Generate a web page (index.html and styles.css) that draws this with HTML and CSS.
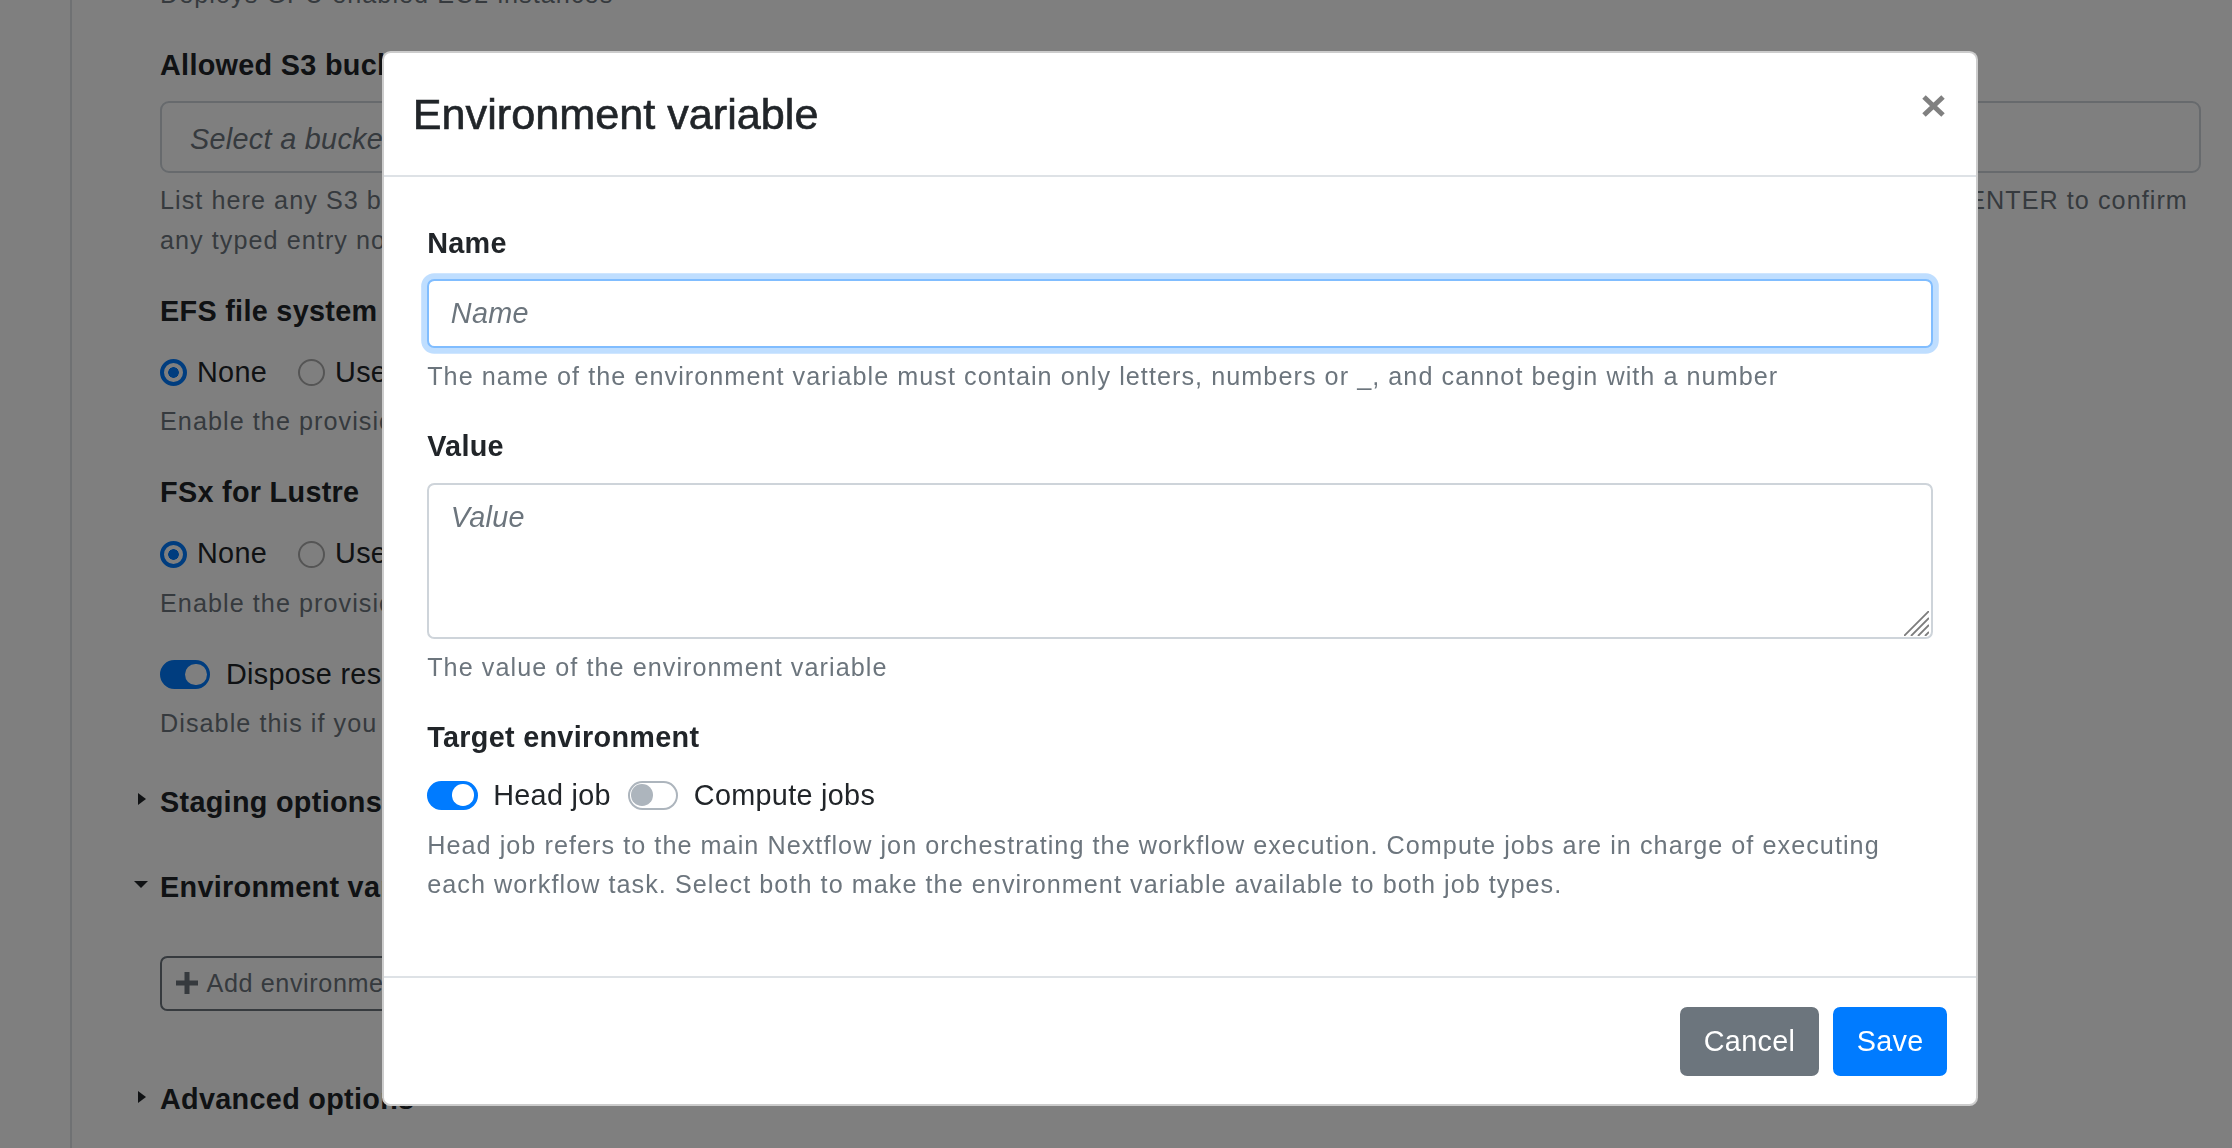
FILE: index.html
```html
<!DOCTYPE html>
<html lang="en">
<head>
<meta charset="utf-8">
<title>Environment variable</title>
<link rel="stylesheet" href="styles.css">
</head>
<body>
<div class="page">
  <aside class="sidebar"></aside>
  <main class="content">
    <p class="bg-help first">Deploys GPU enabled EC2 instances</p>

    <section class="bg-group">
      <div class="bg-label">Allowed S3 buckets</div>
      <div class="bg-select"><span class="bg-ph">Select a bucket...</span></div>
      <p class="bg-help multi"><span class="ln">List here any S3 bucket you want to make accessible from this compute environment; choose from the dropdown or type the bucket name and press ENTER to confirm</span><span class="ln">any typed entry not listed in the dropdown menu.</span></p>
    </section>

    <section class="bg-group">
      <div class="bg-label">EFS file system</div>
      <div class="bg-radios">
        <span class="bg-radio"><span class="dot on"></span>None</span>
        <span class="bg-radio"><span class="dot"></span>Use existing EFS</span>
        <span class="bg-radio"><span class="dot"></span>Create new EFS</span>
      </div>
      <p class="bg-help after-radios">Enable the provisioning of an EFS file system shared across the compute nodes</p>
    </section>

    <section class="bg-group">
      <div class="bg-label">FSx for Lustre</div>
      <div class="bg-radios">
        <span class="bg-radio"><span class="dot on"></span>None</span>
        <span class="bg-radio"><span class="dot"></span>Use existing FSx</span>
        <span class="bg-radio"><span class="dot"></span>Create new FSx</span>
      </div>
      <p class="bg-help after-radios">Enable the provisioning of an FSx for Lustre file system</p>
    </section>

    <div class="bg-switch-row"><span class="track on"></span><span>Dispose resources</span></div>
    <p class="bg-help after-switch">Disable this if you want to preserve the created resources when the compute environment is deleted</p>

    <div class="summary staging"><span class="marker closed"></span><span>Staging options</span></div>
    <div class="summary envvars"><span class="marker open"></span><span>Environment variables</span></div>
    <button class="bg-add" type="button">
      <svg class="plus" width="22" height="22" viewBox="0 0 22 22" aria-hidden="true"><rect x="8.5" y="0" width="5" height="22" fill="currentColor"/><rect x="0" y="8.5" width="22" height="5" fill="currentColor"/></svg>
      <span>Add environment variable</span>
    </button>
    <div class="summary advanced"><span class="marker closed"></span><span>Advanced options</span></div>
  </main>
</div>

<div class="backdrop"></div>

<div class="modal">
  <div class="dialog">
    <header class="m-header">
      <h4 class="m-title">Environment variable</h4>
      <button class="m-close" type="button" aria-label="Close">
        <svg width="25" height="43" viewBox="0 0 25 43" aria-hidden="true"><path d="M2 15 L21 33 M21 15 L2 33" stroke="#808080" stroke-width="5" fill="none"/></svg>
      </button>
    </header>
    <div class="m-body">
      <div class="fg">
        <label class="fl" for="envName">Name</label>
        <input class="fc focused" id="envName" type="text" placeholder="Name">
        <small class="ft">The name of the environment variable must contain only letters, numbers or _, and cannot begin with a number</small>
      </div>
      <div class="fg">
        <label class="fl" for="envValue">Value</label>
        <div class="ta-wrap">
          <textarea class="fc ta" id="envValue" placeholder="Value"></textarea>
          <svg class="grip" width="25" height="25" viewBox="0 0 25 25" aria-hidden="true"><path d="M0 25 L25 0 M7 25 L25 7 M14 25 L25 14 M21 25 L25 21" stroke="#7d7d7d" stroke-width="1.8" fill="none"/></svg>
        </div>
        <small class="ft">The value of the environment variable</small>
      </div>
      <div class="fg last">
        <div class="fl">Target environment</div>
        <div class="sw-row">
          <span class="sw-item"><span class="track on"></span><span>Head job</span></span>
          <span class="sw-item"><span class="track"></span><span>Compute jobs</span></span>
        </div>
        <small class="ft">Head job refers to the main Nextflow jon orchestrating the workflow execution. Compute jobs are in charge of executing each workflow task. Select both to make the environment variable available to both job types.</small>
      </div>
    </div>
    <footer class="m-footer">
      <button class="btn sec" type="button">Cancel</button>
      <button class="btn pri" type="button">Save</button>
    </footer>
  </div>
</div>
</body>
</html>
```

FILE: styles.css
```css
* { box-sizing: border-box; }

html, body {
  margin: 0;
  height: 100%;
  overflow: hidden;
}

body {
  font-family: "Liberation Sans", Arial, Helvetica, sans-serif;
  font-size: 28.8px;
  line-height: 1.5;
  letter-spacing: 0.3px;
  color: #212529;
  background: #fff;
}

/* ---------- background page ---------- */
.page {
  display: flex;
  min-height: 100vh;
}

.sidebar {
  width: 72px;
  flex: none;
  border-right: 2px solid #dee2e6;
}

.content {
  flex: 1;
  padding: 0 31.5px 0 88px;
  margin-top: -26.5px;
}

.bg-help {
  margin: 0;
  font-size: 25.2px;
  line-height: 40px;
  letter-spacing: 1.05px;
  color: #6c757d;
}

.bg-help.first { margin-bottom: 30px; }
.bg-help.multi { margin-top: 7.2px; }
.bg-help .ln { display: block; white-space: nowrap; }
.bg-help.after-radios { margin-top: 4px; }
.bg-help.after-switch { margin-top: 7px; }

.bg-group { margin-bottom: 30px; }

.bg-label {
  font-weight: 700;
  line-height: 43.2px;
  margin-bottom: 14.4px;
}

.bg-select {
  height: 71.6px;
  border: 2px solid #ced4da;
  border-radius: 9px;
  display: flex;
  align-items: center;
  padding: 6px 0 0 28px;
}

.bg-ph {
  font-style: italic;
  color: #6c757d;
}

.bg-radios {
  height: 50px;
  display: flex;
  align-items: center;
  white-space: nowrap;
}

.bg-radio {
  display: flex;
  align-items: center;
  margin-right: 31px;
}

.dot {
  width: 27px;
  height: 27px;
  border-radius: 50%;
  border: 2.5px solid #aaaaaa;
  background: #fff;
  margin-right: 10px;
  flex: none;
}

.dot.on {
  border: 4px solid #007bff;
  background: radial-gradient(circle, #007bff 0 5px, #fff 5.6px);
}

.bg-switch-row {
  height: 43.2px;
  display: flex;
  align-items: center;
}

.bg-switch-row .track { margin-right: 15.6px; }

.summary {
  display: flex;
  align-items: center;
  height: 43.2px;
  font-weight: 700;
  margin-left: -29px;
  white-space: nowrap;
}

.summary.staging { margin-top: 37.9px; }
.summary.envvars { margin-top: 41.4px; }
.summary.advanced { margin-top: 67.5px; }

.marker {
  width: 19px;
  margin-right: 10px;
  display: flex;
  justify-content: center;
  flex: none;
}

.marker.closed::before {
  content: "";
  width: 0;
  height: 0;
  border-top: 6px solid transparent;
  border-bottom: 6px solid transparent;
  border-left: 8px solid #212529;
  margin-top: -7px;
  margin-left: 2px;
}

.marker.open::before {
  content: "";
  width: 0;
  height: 0;
  border-left: 7.5px solid transparent;
  border-right: 7.5px solid transparent;
  border-top: 7px solid #212529;
  margin-top: -5px;
}

.bg-add {
  margin-top: 47px;
  height: 55px;
  display: flex;
  align-items: center;
  gap: 8.5px;
  padding: 0 14px 0 14px;
  border: 2px solid #6c757d;
  border-radius: 7.2px;
  background: #fff;
  color: #6c757d;
  font-family: inherit;
  font-size: 25.2px;
  letter-spacing: 0.6px;
  white-space: nowrap;
}

/* ---------- backdrop ---------- */
.backdrop {
  position: fixed;
  inset: 0;
  background: rgba(0, 0, 0, 0.5);
}

/* ---------- modal ---------- */
.modal {
  position: fixed;
  inset: 0;
}

.dialog {
  margin: 51px 0 0 382px;
  width: 1596px;
  background: #fff;
  border: 2px solid rgba(0, 0, 0, 0.2);
  border-radius: 8.6px;
  display: flex;
  flex-direction: column;
}

.m-header {
  display: flex;
  align-items: flex-start;
  padding: 28.8px;
  border-bottom: 2px solid #dee2e6;
}

.m-title {
  margin: 0;
  font-size: 43.2px;
  line-height: 64.8px;
  font-weight: 400;
  letter-spacing: 0;
  -webkit-text-stroke: 0.6px #212529;
  color: #212529;
}

.m-close {
  margin: -28.8px -28.8px -28.8px auto;
  padding: 28.8px;
  border: 0;
  background: transparent;
  display: flex;
}

.m-body {
  padding: 44.4px 43.2px 43.2px;
}

.fg { margin-bottom: 29px; }
.fg.last { margin-bottom: 29px; }

.fl {
  display: block;
  font-weight: 700;
  line-height: 43.2px;
  margin-bottom: 14.4px;
}

.fc {
  display: block;
  width: 100%;
  font-family: inherit;
  font-size: 28.8px;
  line-height: 43.2px;
  letter-spacing: 0.3px;
  color: #495057;
  background: #fff;
  border: 2px solid #ced4da;
  border-radius: 7.2px;
  padding: 10.8px 21.6px;
  outline: none;
}

.fc::placeholder {
  color: #6c757d;
  font-style: italic;
  opacity: 1;
}

.fc.focused {
  height: 69px;
  border-color: #80bdff;
  box-shadow: 0 0 0 5.8px rgba(0, 123, 255, 0.25);
}

.ta-wrap { position: relative; }

.ta {
  height: 156px;
  resize: none;
}

.grip {
  position: absolute;
  right: 4px;
  bottom: 3px;
}

.ft {
  display: block;
  margin-top: 9px;
  font-size: 25.2px;
  line-height: 39px;
  letter-spacing: 1.05px;
  color: #6c757d;
}

.sw-row {
  height: 43.2px;
  display: flex;
  align-items: center;
  white-space: nowrap;
}

.sw-item {
  display: flex;
  align-items: center;
  margin-right: 17px;
}

.track {
  position: relative;
  width: 50.4px;
  height: 28.8px;
  border-radius: 14.4px;
  border: 2px solid #adb5bd;
  background: #fff;
  margin-right: 15.6px;
  flex: none;
}

.track::after {
  content: "";
  position: absolute;
  top: 1.6px;
  left: 1.6px;
  width: 21.6px;
  height: 21.6px;
  border-radius: 50%;
  background: #adb5bd;
}

.track.on {
  background: #007bff;
  border-color: #007bff;
}

.track.on::after {
  left: 23.2px;
  background: #fff;
}

.m-footer {
  display: flex;
  justify-content: flex-end;
  align-items: center;
  padding: 21.6px;
  border-top: 2px solid #dee2e6;
}

.btn {
  margin: 7.2px;
  font-family: inherit;
  font-size: 28.8px;
  line-height: 43.2px;
  letter-spacing: 0.3px;
  padding: 10.8px 21.6px;
  border: 2px solid transparent;
  border-radius: 7.2px;
  color: #fff;
}

.btn.sec { background: #6c757d; border-color: #6c757d; }
.btn.pri { background: #007bff; border-color: #007bff; }
```
